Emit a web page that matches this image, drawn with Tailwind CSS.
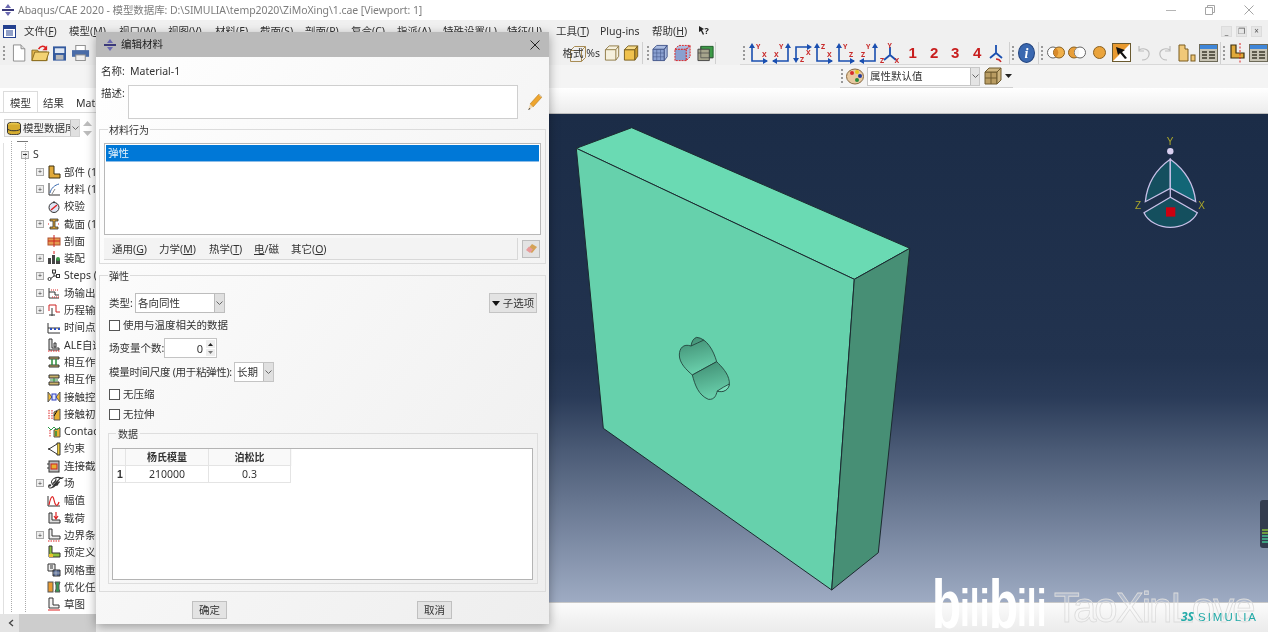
<!DOCTYPE html>
<html lang="zh">
<head>
<meta charset="utf-8">
<title>Abaqus/CAE 2020</title>
<script src="https://cdn.jsdelivr.net/npm/@tailwindcss/browser@4"></script>
</head>
<body class="m-0 overflow-hidden bg-white">
<svg width="0" height="0" class="absolute">
  <defs>
    <g id="arr"><path d="M3 5V19H18" fill="none" stroke="#1a4fb0" stroke-width="1.6"/><path d="M3 1l-3 5h6zM19 19l-5-3v6z" fill="#1a4fb0"/></g>
    <g id="arl"><path d="M17 5V19H2" fill="none" stroke="#1a4fb0" stroke-width="1.6"/><path d="M17 1l-3 5h6zM1 19l5-3v6z" fill="#1a4fb0"/></g>
    <g id="tb"><rect x=".5" y=".5" width="18" height="17" fill="#c8c4b4" stroke="#6d6a58"/><rect x="1" y="1" width="17" height="4" fill="#3f86d8"/><path d="M3 7h5v2H3zM10 7h6v2h-6zM3 10h5v2H3zM10 10h6v2h-6zM3 13h5v2H3zM10 13h6v2h-6z" fill="#5e5b4c"/></g>
    <g id="lp"><path d="M2 1h5v8h6v4H2z" fill="#e0a93a" stroke="#3d3010"/></g>
  </defs>
</svg>
<div class="relative w-[1268px] h-[632px] overflow-hidden bg-white blur-[0.4px] text-[#333333] text-[10.5px] leading-none font-['Noto_Sans','Noto_Sans_CJK_SC',sans-serif]">

  <!-- title bar -->
  <div class="h-[20px] flex items-center bg-white">
    <svg width="14" height="14" viewBox="0 0 14 14" class="ml-[1px]"><path d="M7 1l3 4H4zM7 13l3-4H4z" fill="#6a68b0"/><rect x="1" y="6" width="12" height="2" fill="#3b3a7a"/></svg>
    <span class="ml-[3px] text-[10.5px] text-[#7d7d7d] tracking-[-0.07px] whitespace-nowrap">Abaqus/CAE 2020 - 模型数据库: D:\SIMULIA\temp2020\ZiMoXing\1.cae [Viewport: 1]</span>
    <div class="ml-auto flex items-center text-[#9a9a9a]">
      <span class="w-[10px] h-px bg-[#b5b5b5] mr-[29px]"></span>
      <svg width="10" height="10" viewBox="0 0 10 10" class="mr-[29px]"><path d="M.5 2.5h7v7h-7zM2.5 2.5v-2h7v7h-2" fill="none" stroke="#a5a5a5"/></svg>
      <svg width="10" height="10" viewBox="0 0 10 10" class="mr-[14px]"><path d="M.5.5l9 9M9.5.5l-9 9" stroke="#a5a5a5"/></svg>
    </div>
  </div>

  <!-- menu bar -->
  <div class="h-[21px] pt-[1px] flex items-center bg-[#f0f0f0] whitespace-nowrap">
    <svg width="13" height="13" viewBox="0 0 13 13" class="ml-[3px] mr-[8px]"><rect x=".5" y=".5" width="12" height="12" fill="#fff" stroke="#23408f"/><rect x="1" y="1" width="11" height="3" fill="#23408f"/><path d="M3 6h7M3 8h7M3 10h7" stroke="#23408f"/></svg>
    <span class="w-[45px]">文件(<u>F</u>)</span>
    <span class="w-[50px]">模型(<u>M</u>)</span>
    <span class="w-[49px]">视口(<u>W</u>)</span>
    <span class="w-[47px]">视图(<u>V</u>)</span>
    <span class="w-[45px]">材料(<u>E</u>)</span>
    <span class="w-[45px]">截面(<u>S</u>)</span>
    <span class="w-[46px]">剖面(<u>P</u>)</span>
    <span class="w-[46px]">复合(<u>C</u>)</span>
    <span class="w-[46px]">指派(<u>A</u>)</span>
    <span class="w-[64px]">特殊设置(<u>L</u>)</span>
    <span class="w-[49px]">特征(<u>U</u>)</span>
    <span class="w-[44px]">工具(<u>T</u>)</span>
    <span class="w-[52px]">Plug-ins</span>
    <span class="w-[46px]">帮助(<u>H</u>)</span>
    <svg width="13" height="13" viewBox="0 0 13 13"><path d="M1 1l5 3-2 1 2 4-1 1-2-4-2 1z" fill="#222"/><text x="6.500" y="9" font-size="9" font-weight="700" fill="#222">?</text></svg>
    <div class="ml-auto mr-[6px] flex gap-[4px]">
      <span class="w-[11px] h-[11px] bg-[#e6e6e6] border border-[#dcdcdc] text-[8px] text-center text-[#555]">_</span>
      <span class="w-[11px] h-[11px] bg-[#e6e6e6] border border-[#dcdcdc] text-[8px] text-center text-[#555]">❐</span>
      <span class="w-[11px] h-[11px] bg-[#e6e6e6] border border-[#dcdcdc] text-[8px] text-center text-[#555]">×</span>
    </div>
  </div>

  <!-- toolbar row 1 -->
  <div class="h-[24px] flex items-center bg-[#f0f0f0]">
    <span class="ml-[3px] mr-[7px] h-[14px] border-l-2 border-dotted border-[#999]"></span>
    <svg width="15" height="18" viewBox="0 0 15 18"><path d="M1.5.5h8l4 4v13h-12z" fill="#fff" stroke="#8b8b8b"/><path d="M9.5.5v4h4" fill="#ddd" stroke="#8b8b8b"/></svg>
    <svg width="20" height="18" viewBox="0 0 20 18" class="ml-[5px]"><path d="M1 6h6l1 2h9v9H1z" fill="#e6b94f" stroke="#8a6b1e"/><path d="M4 8h15l-3 9H1z" fill="#f3d273" stroke="#8a6b1e"/><path d="M8 5c2-4 6-4 8-1" fill="none" stroke="#d22" stroke-width="1.6"/><path d="M17 1v5h-5z" fill="#d22"/></svg>
    <svg width="14" height="15" viewBox="0 0 14 15" class="ml-[3px]"><rect width="14" height="15" fill="#345a9e"/><rect x="2" y="2" width="10" height="5" fill="#dfe7f3"/><rect x="3" y="9" width="8" height="5" fill="#b8b8b8"/></svg>
    <svg width="18" height="16" viewBox="0 0 18 16" class="ml-[6px]"><rect x="4" width="10" height="6" fill="#fff" stroke="#888"/><rect y="5" width="18" height="7" fill="#4a6ca8"/><rect x="4" y="10" width="10" height="6" fill="#eee" stroke="#888"/></svg>

    <span class="ml-[473px] whitespace-nowrap relative">
      <svg width="18" height="18" viewBox="0 0 18 18" class="absolute left-[6px] -top-[3px]"><path d="M1.5 5.5h11v11h-11zM1.5 5.5l4-4h11v11l-4 4M12.5 5.5l4-4" fill="none" stroke="#a88c55"/></svg>
      <span class="relative">格式 %s</span>
    </span>
    <svg width="17" height="18" viewBox="0 0 17 18" class="ml-[4px]"><path d="M1.5 5.5h11v11h-11zM1.5 5.5l4-4h10v11l-3 4M12.5 5.5l3-4" fill="#f5f0dd" stroke="#8f7a45"/></svg>
    <svg width="17" height="18" viewBox="0 0 17 18" class="ml-[3px]"><path d="M1.5 5.5h11v11h-11z" fill="#f0c24e" stroke="#7a5f1e"/><path d="M1.5 5.5l4-4h10l-3 4z" fill="#f8dc8a" stroke="#7a5f1e"/><path d="M12.5 5.5l3-4v11l-3 4z" fill="#c99a2b" stroke="#7a5f1e"/></svg>
    <span class="ml-[3px] h-[22px] border-l border-[#d0d0d0]"></span>
    <span class="ml-[4px] mr-[3px] h-[14px] border-l-2 border-dotted border-[#999]"></span>
    <svg width="17" height="18" viewBox="0 0 17 18"><path d="M1 5h12v12H1z" fill="#8aa0d0" stroke="#45588c"/><path d="M1 5l4-4h11l-3 4zM13 5l3-4v12l-3 4z" fill="#a9bbe0" stroke="#45588c"/><path d="M5 5v12M9 5v12M1 9h12M1 13h12" stroke="#45588c" stroke-width=".6"/></svg>
    <svg width="18" height="18" viewBox="0 0 18 18" class="ml-[6px]"><path d="M1 5h12v12H1z" fill="#8aa0d0" stroke="#d22" stroke-dasharray="2 1"/><path d="M1 5l4-4h12l-4 4zM13 5l4-4v12l-4 4z" fill="#a9bbe0" stroke="#d22" stroke-dasharray="2 1"/></svg>
    <svg width="18" height="18" viewBox="0 0 18 18" class="ml-[6px]"><path d="M4 2h13v12H4z" fill="#3c9a46" stroke="#1f5c2a"/><path d="M1 5h12v12H1z" fill="#a7a58c" stroke="#444"/><path d="M4 2v12h13M1 9h12" fill="none" stroke="#444" stroke-width=".7"/></svg>
    <span class="ml-[1px] h-[22px] border-l border-[#d0d0d0]"></span>

    <div class="ml-[24px] flex-1 h-[24px] border-b border-[#d8d8d8] flex items-center">
      <span class="ml-[3px] mr-[4px] h-[14px] border-l-2 border-dotted border-[#999]"></span>
      <svg width="20" height="22" viewBox="0 0 20 22" font-size="7" font-weight="700" fill="#c82a2a"><use href="#arr"/><text x="7" y="7">Y</text><text x="13" y="15">X</text></svg>
      <svg width="20" height="22" viewBox="0 0 20 22" font-size="7" font-weight="700" fill="#c82a2a" class="ml-[2px]"><use href="#arl"/><text x="3" y="15">X</text><text x="8" y="7">Y</text></svg>
      <svg width="20" height="22" viewBox="0 0 20 22" font-size="7" font-weight="700" fill="#c82a2a" class="ml-[2px]"><path d="M3 19V5H17" fill="none" stroke="#1a4fb0" stroke-width="1.6"/><path d="M3 21l-3-5h6zM19 5l-5-3v6z" fill="#1a4fb0"/><text x="7" y="20">Z</text><text x="13" y="13">X</text></svg>
      <svg width="20" height="22" viewBox="0 0 20 22" font-size="7" font-weight="700" fill="#c82a2a" class="ml-[1px]"><use href="#arr"/><text x="7" y="7">Z</text><text x="13" y="15">X</text></svg>
      <svg width="20" height="22" viewBox="0 0 20 22" font-size="7" font-weight="700" fill="#c82a2a" class="ml-[2px]"><use href="#arr"/><text x="7" y="7">Y</text><text x="13" y="15">Z</text></svg>
      <svg width="20" height="22" viewBox="0 0 20 22" font-size="7" font-weight="700" fill="#c82a2a" class="ml-[2px]"><use href="#arl"/><text x="3" y="15">Z</text><text x="8" y="7">Y</text></svg>
      <svg width="20" height="22" viewBox="0 0 20 22" font-size="7" font-weight="700" fill="#c82a2a" class="ml-[2px]"><path d="M10 5v8L4 18M10 13l6 5" fill="none" stroke="#1a4fb0" stroke-width="1.8"/><text x="7.500" y="6">Y</text><text x="0" y="21">Z</text><text x="14.500" y="21">X</text></svg>
      <span class="ml-[8px] w-[21.5px] text-[#c81e1e] text-[15px] font-bold font-['Liberation_Sans',sans-serif]">1</span>
      <span class="w-[21px] text-[#c81e1e] text-[15px] font-bold font-['Liberation_Sans',sans-serif]">2</span>
      <span class="w-[22px] text-[#c81e1e] text-[15px] font-bold font-['Liberation_Sans',sans-serif]">3</span>
      <span class="w-[13px] text-[#c81e1e] text-[15px] font-bold font-['Liberation_Sans',sans-serif]">4</span>
      <svg width="16" height="20" viewBox="0 0 16 20" class="ml-[2px]"><path d="M8 2v8L2 15M8 10l6 5" fill="none" stroke="#1a4fb0" stroke-width="1.8"/><path d="M8 16c2 0 4 1 5 3" fill="none" stroke="#c82a2a" stroke-width="1.4"/></svg>
      <span class="ml-[5px] h-[22px] border-l border-[#d0d0d0]"></span>
      <span class="ml-[2px] h-[14px] border-l-2 border-dotted border-[#999]"></span>
      <span class="ml-[4px] w-[17px] h-[20px] rounded-[50%] bg-[#3a68b0] border border-[#24457f] text-white text-[14px] font-bold italic text-center leading-[19px] font-['Liberation_Serif',serif]">i</span>
      <span class="ml-[3px] h-[22px] border-l border-[#d0d0d0]"></span>
      <span class="ml-[2px] h-[14px] border-l-2 border-dotted border-[#999]"></span>
      <svg width="20" height="13" viewBox="0 0 20 13" class="ml-[3px]"><circle cx="7" cy="6.5" r="5.5" fill="#fff" stroke="#666"/><circle cx="13" cy="6.5" r="5.5" fill="#f0b04a" stroke="#8a6020"/><path d="M10 2a5.5 5.5 0 0 1 0 9a5.5 5.5 0 0 1 0-9z" fill="#d98a2a"/></svg>
      <svg width="20" height="13" viewBox="0 0 20 13" class="ml-[1px]"><circle cx="7" cy="6.5" r="5.5" fill="#e89f3a" stroke="#8a6020"/><circle cx="13" cy="6.5" r="5.5" fill="#fff" stroke="#666"/><path d="M10 2a5.5 5.5 0 0 0 0 9a5.5 5.5 0 0 0 0-9z" fill="#f4f4f4"/></svg>
      <svg width="13" height="13" viewBox="0 0 13 13" class="ml-[6px]"><circle cx="6.5" cy="6.5" r="6" fill="#eaa43c" stroke="#8a6020"/></svg>
      <svg width="19" height="19" viewBox="0 0 19 19" class="ml-[6px]"><rect x=".5" y=".5" width="18" height="18" fill="#fff" stroke="#6a5a30"/><path d="M1 1h17L1 18z" fill="#e99a30"/><path d="M4 4l9 3-3 2 5 6-2 1-5-6-2 2z" fill="#111"/></svg>
      <svg width="15" height="16" viewBox="0 0 15 16" class="ml-[5px]"><path d="M3 5c5-3 11 0 10 5s-5 5-7 5M3 1v5h5" fill="none" stroke="#bdbdbd" stroke-width="1.2"/></svg>
      <svg width="15" height="16" viewBox="0 0 15 16" class="ml-[7px]"><path d="M12 5C7 2 1 5 2 10s5 5 7 5M12 1v5H7" fill="none" stroke="#bdbdbd" stroke-width="1.2"/></svg>
      <svg width="18" height="18" viewBox="0 0 18 18" class="ml-[5px]"><path d="M1 1h6v4h3v12H1z" fill="#f0c878" stroke="#7b5c20"/><rect x="13" y="11" width="4" height="6" fill="#f0c878" stroke="#7b5c20"/></svg>
      <svg width="19" height="18" viewBox="0 0 19 18" class="ml-[3px]"><use href="#tb"/></svg>
      <span class="ml-[2px] h-[22px] border-l border-[#d0d0d0]"></span>
      <span class="ml-[2px] h-[14px] border-l-2 border-dotted border-[#999]"></span>
      <svg width="16" height="20" viewBox="0 0 16 20" class="ml-[4px]"><path d="M2 2h5v8h8v5H2z" fill="#e0a93a" stroke="#3d3010" stroke-width="1.2"/><path d="M11 0v20" stroke="#d22" stroke-dasharray="2 1.5"/></svg>
      <svg width="19" height="18" viewBox="0 0 19 18" class="ml-[4px]"><use href="#tb"/></svg>
    </div>
  </div>

  <!-- toolbar row 2 -->
  <div class="h-[23px] flex items-center bg-[#f4f4f4]">
    <div class="ml-[840px] w-[173px] h-[23px] border-b border-[#d0d0d0] flex items-center">
      <span class="ml-[1px] h-[14px] border-l-2 border-dotted border-[#999]"></span>
      <svg width="18" height="17" viewBox="0 0 18 17" class="ml-[3px]"><ellipse cx="9" cy="8.5" rx="8.5" ry="7.5" fill="#e7c9a0" stroke="#8a6a40"/><circle cx="6" cy="5" r="2" fill="#d62c2c"/><circle cx="11" cy="4" r="2" fill="#e6c81e"/><circle cx="14" cy="8" r="2" fill="#223a9c"/><circle cx="11" cy="12" r="2" fill="#2a8c3a"/></svg>
      <div class="ml-[3px] w-[113px] h-[19px] bg-white border border-[#c8c8c8] flex items-center">
        <span class="ml-[2px] text-[10.5px]">属性默认值</span>
        <span class="ml-auto w-[9px] h-[17px] bg-[#e4e4e4] border-l border-[#bdbdbd] flex items-center justify-center"><svg width="7" height="4" viewBox="0 0 7 4"><path d="M.5.5l3 3 3-3" fill="none" stroke="#666"/></svg></span>
      </div>
      <svg width="18" height="18" viewBox="0 0 18 18" class="ml-[4px]"><path d="M1 5h12v12H1z" fill="#b99c62" stroke="#6e5a2e"/><path d="M1 5l4-4h12l-4 4zM13 5l4-4v12l-4 4z" fill="#cdb47e" stroke="#6e5a2e"/><path d="M1 11h12M7 5v12" stroke="#6e5a2e"/></svg>
      <svg width="7" height="4" viewBox="0 0 7 4" class="ml-[3px]"><path d="M0 0h7L3.500 4z" fill="#222"/></svg>
    </div>
  </div>

  <!-- main area -->
  <div class="flex h-[544px]">
    <!-- left panel -->
    <div class="relative w-[96px] shrink-0 bg-white whitespace-nowrap overflow-hidden">
      <div class="h-[25px] pt-[4px] flex items-end bg-white border-b border-[#dcdcdc]">
        <span class="ml-[3px] shrink-0 w-[35px] h-[21px] pt-[2px] bg-white border border-b-0 border-[#dcdcdc] flex items-center justify-center">模型</span>
        <span class="ml-[5px] shrink-0 w-[33px] h-[19px] pt-[1px] flex items-center">结果</span>
        <span class="shrink-0 w-[30px] h-[19px] pt-[1px] flex items-center">Material</span>
      </div>
      <div class="h-[30px] flex items-center">
        <div class="ml-[4px] w-[76px] h-[18px] flex items-center bg-[#f4f4f4] border border-[#d4d4d4]">
          <svg width="14" height="13" viewBox="0 0 14 13" class="ml-[2px] shrink-0"><ellipse cx="7" cy="2.500" rx="6.500" ry="2.500" fill="#e6c64c" stroke="#333"/><path d="M.5 2.500v8c0 3 13 3 13 0v-8" fill="#d6ad30" stroke="#333"/><path d="M.5 6.500c0 3 13 3 13 0" fill="none" stroke="#333"/></svg>
          <span class="ml-[2px] w-[47px] overflow-hidden">模型数据库</span>
          <span class="ml-auto w-[9px] h-[16px] bg-[#e0e0e0] border-l border-[#bbb] flex items-center justify-center"><svg width="7" height="4" viewBox="0 0 7 4"><path d="M.5.5l3 3 3-3" fill="none" stroke="#666"/></svg></span>
        </div>
        <div class="ml-[3px] flex flex-col gap-[5px]">
          <svg width="9" height="5" viewBox="0 0 9 5"><path d="M0 5L4.500 0 9 5z" fill="#bdbdbd"/></svg>
          <svg width="9" height="5" viewBox="0 0 9 5"><path d="M0 0l4.500 5L9 0z" fill="#bdbdbd"/></svg>
        </div>
      </div>

      <!-- tree guide lines -->
      <span class="absolute left-[11px] top-[53px] h-[471px] border-l border-dotted border-[#aaa]"></span>
      <span class="absolute left-[25px] top-[53px] h-[471px] border-l border-dotted border-[#aaa]"></span>
      <span class="absolute left-[17px] top-[53px] w-[11px] h-px bg-[#777]"></span>

      <div class="w-[300px] h-[471px] ml-[3px] border-l border-[#e0e0e0] pt-[3px] overflow-hidden">
        <div class="h-[17.300px] flex items-center"><span class="ml-[17px] w-[8px] h-[8px] bg-[#eee] border border-[#aaa] flex items-center justify-center"><i class="w-[4px] h-px bg-[#333]"></i></span><span class="ml-[4px]">S</span></div>

        <div class="h-[17.300px] flex items-center"><span class="ml-[32px] w-[8px] h-[8px] bg-[#eee] border border-[#aaa] flex items-center justify-center text-[7px] text-[#333]">+</span><svg width="14" height="14" viewBox="0 0 14 14" class="ml-[3px] mr-[3px]"><use href="#lp"/></svg>部件 (1)</div>
        <div class="h-[17.300px] flex items-center"><span class="ml-[32px] w-[8px] h-[8px] bg-[#eee] border border-[#aaa] flex items-center justify-center text-[7px] text-[#333]">+</span><svg width="14" height="14" viewBox="0 0 14 14" class="ml-[3px] mr-[3px]"><path d="M2 1v12h11" fill="none" stroke="#333"/><path d="M3 11C4 6 8 3 12 2" fill="none" stroke="#3a6ab0"/><path d="M5 12l3-5" stroke="#888"/></svg>材料 (1)</div>
        <div class="h-[17.300px] flex items-center"><span class="ml-[43px]"></span><svg width="14" height="14" viewBox="0 0 14 14" class="mr-[3px]"><circle cx="7" cy="7.500" r="5" fill="#dfe6f5" stroke="#333"/><path d="M4 10l6-5" stroke="#d22" stroke-width="1.500"/><path d="M7 1v2" stroke="#333"/></svg>校验</div>
        <div class="h-[17.300px] flex items-center"><span class="ml-[32px] w-[8px] h-[8px] bg-[#eee] border border-[#aaa] flex items-center justify-center text-[7px] text-[#333]">+</span><svg width="14" height="14" viewBox="0 0 14 14" class="ml-[3px] mr-[3px]"><path d="M3 2h8v2H8v6h3v2H3v-2h3V4H3z" fill="#d8a034" stroke="#333" stroke-width=".8"/><path d="M1 7h2M11 7h2" stroke="#d22" stroke-dasharray="1 1"/></svg>截面 (1)</div>
        <div class="h-[17.300px] flex items-center"><span class="ml-[43px]"></span><svg width="14" height="14" viewBox="0 0 14 14" class="mr-[3px]"><rect x="1" y="4" width="12" height="7" fill="#e49a50" stroke="#b05030"/><path d="M7 1v12M1 7h12" stroke="#c22"/></svg>剖面</div>
        <div class="h-[17.300px] flex items-center"><span class="ml-[32px] w-[8px] h-[8px] bg-[#eee] border border-[#aaa] flex items-center justify-center text-[7px] text-[#333]">+</span><svg width="14" height="14" viewBox="0 0 14 14" class="ml-[3px] mr-[3px]"><path d="M1 7h3v6H1zM5 4h3v9H5zM9 8h4v5H9z" fill="#444"/><circle cx="11" cy="8" r="2" fill="#3a9a46"/><path d="M7 0v3" stroke="#d22"/></svg>装配</div>
        <div class="h-[17.300px] flex items-center"><span class="ml-[32px] w-[8px] h-[8px] bg-[#eee] border border-[#aaa] flex items-center justify-center text-[7px] text-[#333]">+</span><svg width="14" height="14" viewBox="0 0 14 14" class="ml-[3px] mr-[3px]"><path d="M3 10l4-3 4 0M7 7V3" stroke="#333" fill="none"/><circle cx="2.500" cy="10" r="1.500" fill="#fff" stroke="#333"/><rect x="5.500" y="1" width="3" height="3" fill="#fff" stroke="#333"/><rect x="9.500" y="5.500" width="3" height="3" fill="#fff" stroke="#333"/></svg>Steps (2)</div>
        <div class="h-[17.300px] flex items-center"><span class="ml-[32px] w-[8px] h-[8px] bg-[#eee] border border-[#aaa] flex items-center justify-center text-[7px] text-[#333]">+</span><svg width="14" height="14" viewBox="0 0 14 14" class="ml-[3px] mr-[3px]"><path d="M2 2v10h10M2 6h6v3h4" fill="none" stroke="#333"/><path d="M4 4h8M5 11h8" stroke="#d22" stroke-dasharray="1 1"/></svg>场输出请求</div>
        <div class="h-[17.300px] flex items-center"><span class="ml-[32px] w-[8px] h-[8px] bg-[#eee] border border-[#aaa] flex items-center justify-center text-[7px] text-[#333]">+</span><svg width="14" height="14" viewBox="0 0 14 14" class="ml-[3px] mr-[3px]"><path d="M2 2h7v7M2 2v6M9 9h4" fill="none" stroke="#c22"/><path d="M5 5v8M2 12h6" stroke="#333"/></svg>历程输出请求</div>
        <div class="h-[17.300px] flex items-center"><span class="ml-[43px]"></span><svg width="14" height="14" viewBox="0 0 14 14" class="mr-[3px]"><path d="M1 2v10h12M1 7h12" fill="none" stroke="#333"/><path d="M3 8h2M7 8h2M11 8h2" stroke="#2a4cc0" stroke-width="2"/></svg>时间点</div>
        <div class="h-[17.300px] flex items-center"><span class="ml-[43px]"></span><svg width="14" height="14" viewBox="0 0 14 14" class="mr-[3px]"><path d="M2 1h3v9h7v2H2zM7 5h2v4H7z" fill="#ddd" stroke="#333"/><path d="M1 13h12" stroke="#d22" stroke-dasharray="1.500 1"/></svg>ALE自适应</div>
        <div class="h-[17.300px] flex items-center"><span class="ml-[43px]"></span><svg width="14" height="14" viewBox="0 0 14 14" class="mr-[3px]"><path d="M2 2h10v2H2zM2 10h10v2H2z" fill="#cbb26a" stroke="#333"/><path d="M5 4v6M9 4v6" stroke="#2a8c3a" stroke-width="1.500"/></svg>相互作用</div>
        <div class="h-[17.300px] flex items-center"><span class="ml-[43px]"></span><svg width="14" height="14" viewBox="0 0 14 14" class="mr-[3px]"><path d="M2 2h10v3H2zM2 9h10v3H2z" fill="#cbb26a" stroke="#333"/><path d="M7 5v4M3 7h8" stroke="#2a8c3a"/></svg>相互作用属性</div>
        <div class="h-[17.300px] flex items-center"><span class="ml-[43px]"></span><svg width="14" height="14" viewBox="0 0 14 14" class="mr-[3px]"><path d="M1 2l4 5-4 5zM13 2l-4 5 4 5z" fill="#eebb3a" stroke="#555"/><rect x="5" y="4" width="4" height="6" fill="#dfe6ff" stroke="#2a3cc0"/></svg>接触控制</div>
        <div class="h-[17.300px] flex items-center"><span class="ml-[43px]"></span><svg width="14" height="14" viewBox="0 0 14 14" class="mr-[3px]"><path d="M7 13V5l6-3v11z" fill="#e8b030" stroke="#555"/><path d="M2 3v10M5 3v10" stroke="#d22" stroke-dasharray="1.500 1"/><path d="M7 9l3-5" stroke="#111"/></svg>接触初始化</div>
        <div class="h-[17.300px] flex items-center"><span class="ml-[43px]"></span><svg width="14" height="14" viewBox="0 0 14 14" class="mr-[3px]"><path d="M7 13V6l6-2v9z" fill="#e8b030" stroke="#555"/><path d="M1 3l3 3 3-3 3 3 3-3" fill="none" stroke="#2a9a46"/><path d="M3 6v7" stroke="#d22" stroke-dasharray="1.500 1"/><path d="M9 12V7" stroke="#2a8c3a" stroke-width="1.500"/></svg>Contact</div>
        <div class="h-[17.300px] flex items-center"><span class="ml-[43px]"></span><svg width="14" height="14" viewBox="0 0 14 14" class="mr-[3px]"><path d="M10 1h3v12h-3z" fill="#e8c840" stroke="#333"/><path d="M10 2L2 7l8 5" fill="#fff" stroke="#333"/><circle cx="2" cy="7" r="1" fill="#333"/></svg>约束</div>
        <div class="h-[17.300px] flex items-center"><span class="ml-[43px]"></span><svg width="14" height="14" viewBox="0 0 14 14" class="mr-[3px]"><rect x="2" y="2" width="10" height="11" fill="#bbb" stroke="#333"/><rect x="4" y="5" width="6" height="5" fill="#e8b030" stroke="#c22"/><path d="M0 5h2M0 9h2" stroke="#333"/></svg>连接截面</div>
        <div class="h-[17.300px] flex items-center"><span class="ml-[32px] w-[8px] h-[8px] bg-[#eee] border border-[#aaa] flex items-center justify-center text-[7px] text-[#333]">+</span><span class="ml-[3px] mr-[3px] w-[14px] text-center text-[15px] italic font-bold font-['Liberation_Serif',serif]">ℱ</span>场</div>
        <div class="h-[17.300px] flex items-center"><span class="ml-[43px]"></span><svg width="14" height="14" viewBox="0 0 14 14" class="mr-[3px]"><path d="M1 2v10h12" fill="none" stroke="#333"/><path d="M2 11C4 1 6 1 7 6s3 8 5 2" fill="none" stroke="#d22" stroke-width="1.200"/></svg>幅值</div>
        <div class="h-[17.300px] flex items-center"><span class="ml-[43px]"></span><svg width="14" height="14" viewBox="0 0 14 14" class="mr-[3px]"><path d="M2 2h3v7h8v3H2z" fill="#ddd" stroke="#333"/><path d="M9 1v6M7 5l2 3 2-3" fill="none" stroke="#d22" stroke-width="1.200"/></svg>载荷</div>
        <div class="h-[17.300px] flex items-center"><span class="ml-[32px] w-[8px] h-[8px] bg-[#eee] border border-[#aaa] flex items-center justify-center text-[7px] text-[#333]">+</span><svg width="14" height="14" viewBox="0 0 14 14" class="ml-[3px] mr-[3px]"><path d="M2 1h3v7h8v3H2z" fill="#eee" stroke="#333"/><path d="M1 13h12" stroke="#d22" stroke-dasharray="1.500 1"/></svg>边界条件</div>
        <div class="h-[17.300px] flex items-center"><span class="ml-[43px]"></span><svg width="14" height="14" viewBox="0 0 14 14" class="mr-[3px]"><path d="M2 1h3v7h8v4H2z" fill="#8fc23a" stroke="#333"/><path d="M2 9h4v3H2z" fill="#e8c030"/></svg>预定义场</div>
        <div class="h-[17.300px] flex items-center"><span class="ml-[43px]"></span><svg width="14" height="14" viewBox="0 0 14 14" class="mr-[3px]"><path d="M1 1h7v7H1z" fill="#eee" stroke="#333"/><path d="M3 3h3M3 5h3" stroke="#333"/><path d="M6 7h7v6H6z" fill="#5a6e98" stroke="#333"/><path d="M9 7v6M6 10h7" stroke="#ddd" stroke-width=".5"/></svg>网格重划分</div>
        <div class="h-[17.300px] flex items-center"><span class="ml-[43px]"></span><svg width="14" height="14" viewBox="0 0 14 14" class="mr-[3px]"><rect x="1" y="2" width="5" height="10" fill="#e89a30" stroke="#555"/><path d="M8 2h5l-1 3v4l1 3H8l1-3V5z" fill="#3a9a56" stroke="#555"/></svg>优化任务</div>
        <div class="h-[17.300px] flex items-center"><span class="ml-[43px]"></span><svg width="14" height="14" viewBox="0 0 14 14" class="mr-[3px]"><path d="M2 1h4v7h6v3H2z" fill="#f4f4f4" stroke="#333"/><path d="M1 13h12" stroke="#d22"/></svg>草图</div>
      </div>

      <div class="absolute left-0 bottom-0 w-full h-[18px] bg-[#e4e4e4] flex items-center">
        <svg width="6" height="8" viewBox="0 0 6 8" class="ml-[8px]"><path d="M5 1L1.500 4 5 7" fill="none" stroke="#444" stroke-width="1.300"/></svg>
        <span class="ml-[5px] flex-1 h-[18px] bg-[#cdcdcd]"></span>
      </div>
    </div>

    <!-- viewport column -->
    <div class="flex-1 flex flex-col">
      <div class="h-[26px] shrink-0 bg-linear-to-b from-white to-[#ececec] border-b border-[#bdbdbd]"></div>
      <div class="relative h-[488px] shrink-0 bg-[linear-gradient(to_bottom,#1b2c47_0%,#22334f_50%,#2a3b58_58%,#4b5b76_69%,#66758f_79%,#9eabc3_100%)]">
        <svg width="1172" height="488" viewBox="96 114 1172 488" class="absolute left-0 top-0">
          <defs>
            <linearGradient id="hu" x1="0" y1="0" x2=".25" y2="1"><stop offset="0" stop-color="#3e8a70"/><stop offset="1" stop-color="#6ad0ac"/></linearGradient>
            <linearGradient id="hl" x1="0" y1="0" x2=".25" y2="1"><stop offset="0" stop-color="#3e8a70"/><stop offset="1" stop-color="#69cfab"/></linearGradient>
          </defs>
          <g stroke="#1c2a30" stroke-width="1" stroke-linejoin="round">
            <path d="M576.300 148.300L631.700 127.700L909.800 248.300L854.300 279.300Z" fill="#6adab3"/>
            <path d="M576.300 148.300L854.300 279.300L831.700 590L603.300 428.300Z" fill="#66d1ac"/>
            <path d="M854.300 279.300L909.800 248.300L878.300 552.700L831.700 590Z" fill="#478f75"/>
          </g>
          <g transform="translate(640 320) scale(.3333)" stroke="#22403a" stroke-width="2.600">
            <path d="M153 78C130 70 118 85 118 105C118 130 140 150 157 165L230 125C220 90 200 55 170 52C160 55 155 65 153 78Z" fill="url(#hu)"/>
            <path d="M157 165C165 195 175 225 205 238C225 240 228 225 232 213C250 220 270 205 268 185C265 160 245 140 230 125Z" fill="url(#hl)"/>
            <path d="M153 78C165 72 180 66 192 60" fill="none"/>
            <path d="M232 213C245 205 255 198 268 192C268 208 250 220 232 213Z" fill="#7adfbc"/>
          </g>
          <g>
            <circle cx="1170.300" cy="151.300" r="3.200" fill="#d8cff0"/>
            <path d="M1170.300 159.300C1155 170 1147 185 1145.300 201.700L1170.300 188.300Z" fill="#154f5f" stroke="#c8c0e8" stroke-width="1.300"/>
            <path d="M1170.300 159.300C1185 170 1194 185 1195.700 201.700L1170.300 188.300Z" fill="#126676" stroke="#c8c0e8" stroke-width="1.300"/>
            <path d="M1170.300 197.300L1144 212.700C1148 222 1160 227.300 1170.300 227.300C1181 227.300 1193 222 1197.300 212.700Z" fill="#144f5e" stroke="#c8c0e8" stroke-width="1.300"/>
            <path d="M1170.300 188.300V197.300" stroke="#c8c0e8" stroke-width="1.300"/>
            <rect x="1166" y="207.300" width="9.300" height="9.300" fill="#cc0010"/>
          </g>
          <g fill="#aaa62a" font-size="10" text-anchor="middle" font-family="Liberation Sans">
            <text x="1170" y="145">Y</text><text x="1138" y="209">Z</text><text x="1201.700" y="209">X</text>
          </g>
        </svg>
        <div class="absolute right-0 top-[386px] w-[8px] h-[48px] rounded-l-[3px] bg-[#333c4e] flex flex-col justify-end gap-px pb-[5px] pl-[2px]">
          <i class="h-[2px] bg-[#6f9d3e]"></i><i class="h-[2px] bg-[#6f9d3e]"></i><i class="h-[2px] bg-[#3ea080]"></i><i class="h-[2px] bg-[#3ea080]"></i><i class="h-[2px] bg-[#3ea080]"></i>
        </div>
      </div>
      <div class="flex-1 bg-linear-to-b from-[#fbfbfb] to-[#ebebeb] border-t border-[#c8c8c8]"></div>
    </div>
  </div>

  <!-- watermark -->
  <div class="absolute left-[932px] top-[570px] flex text-white font-bold font-['Liberation_Sans',sans-serif] h-[62px] overflow-hidden">
    <span class="w-[28px] text-[68px] leading-[68px] scale-x-[0.7] origin-left">b</span>
    <span class="w-[29px] mt-[8px] text-[52px] leading-[60px] scale-x-[0.68] origin-left">ili</span>
    <span class="w-[28px] text-[68px] leading-[68px] scale-x-[0.7] origin-left">b</span>
    <span class="w-[29px] mt-[8px] text-[52px] leading-[60px] scale-x-[0.68] origin-left">ili</span>
  </div>
  <div class="absolute left-[1054px] top-[583px] text-white/20 text-[42px] leading-[50px] tracking-[-2px] [-webkit-text-stroke:0.8px_#dcdcdc] font-['Liberation_Sans',sans-serif]">TaoXinLove</div>
  <div class="absolute left-[1181px] top-[611px] flex items-end text-[#22aaa8]">
    <span class="text-[12px] font-bold italic leading-[12px]">3S</span>
    <span class="ml-[4px] text-[11.5px] tracking-[2px] leading-[12px] font-['Liberation_Sans',sans-serif]">SIMULIA</span>
  </div>

  <!-- dialog window -->
  <div class="absolute left-[96px] top-[32px] w-[453px] h-[592px] flex flex-col bg-linear-to-br from-white to-[#eeeeee] shadow-[0_3px_10px_rgba(0,0,0,0.35)]">
    <div class="h-[25px] shrink-0 bg-[#bababa] flex items-center">
      <svg width="14" height="14" viewBox="0 0 14 14" class="ml-[7px]"><path d="M7 1l3 4H4zM7 13l3-4H4z" fill="#6a68b0"/><rect x="1" y="6" width="12" height="2" fill="#3b3a7a"/></svg>
      <span class="ml-[4px] text-[10.5px] text-[#1e1e1e]">编辑材料</span>
      <svg width="10" height="10" viewBox="0 0 10 10" class="ml-auto mr-[9px]"><path d="M.5.5l9 9M9.5.5l-9 9" stroke="#222"/></svg>
    </div>

    <div class="flex-1 pl-[3px] whitespace-nowrap">
      <div class="mt-[7px] h-[14px] flex items-center"><span class="ml-[2px] w-[29px]">名称:</span><span>Material-1</span></div>
      <div class="mt-[7px] h-[34px] flex items-start">
        <span class="ml-[2px] mt-[3px] w-[27px]">描述:</span>
        <div class="w-[390px] h-[34px] bg-white border border-[#cfcfcf]"></div>
        <svg width="17" height="18" viewBox="0 0 17 18" class="ml-[8px] mt-[8px]"><path d="M4 11L13 1l3 3-9 10z" fill="#eea52e" stroke="#b57a1c" stroke-width=".6"/><path d="M4 11l3 3-5 3z" fill="#f2d9b0"/><path d="M2 17l1.500-2 1 1z" fill="#333"/><path d="M12.500 1.500l3 3 .5-1-2.500-2.500z" fill="#d8cfc0"/></svg>
      </div>

      <!-- material behaviour group -->
      <div class="relative mt-[10px] w-[447px] h-[135px] border border-[#dcdcdc] pl-[4px] pt-[13px]">
        <span class="absolute left-[8px] -top-[5px] px-[1px] bg-[#fbfbfb] text-[10px] leading-[11px]">材料行为</span>
        <div class="w-[437px] h-[92px] bg-white border border-[#b8b8b8] p-px">
          <div class="h-[17px] pt-[1px] bg-[#0078d7] border-b border-[#8dbde8] text-white/90 pl-[2px] flex items-center">弹性</div>
        </div>
        <div class="mt-[3px] flex items-start">
          <div class="w-[414px] h-[22px] pt-[2px] bg-[#f3f3f3] border-r border-b border-[#d8d8d8] flex items-center">
            <span class="ml-[8px] w-[47px]">通用(<u>G</u>)</span>
            <span class="w-[50px]">力学(<u>M</u>)</span>
            <span class="w-[45px]">热学(<u>T</u>)</span>
            <span class="w-[37px]"><u>电</u>/磁</span>
            <span>其它(<u>O</u>)</span>
          </div>
          <button class="ml-[4px] mt-[2px] w-[18px] h-[18px] bg-[#e3e3e3] border border-[#bdbdbd] flex items-center justify-center"><svg width="13" height="12" viewBox="0 0 13 12"><path d="M7 1l5 3-5 6-5-3z" fill="#d4a256"/><path d="M1 7l3-3.500 4 3L5 10z" fill="#e89a9a"/></svg></button>
        </div>
      </div>

      <!-- elasticity group -->
      <div class="relative mt-[11px] w-[447px] h-[317px] border border-[#dcdcdc] pl-[9px] pr-[8px] pt-[17px]">
        <span class="absolute left-[8px] -top-[5px] px-[1px] bg-[#f8f8f8] text-[10px] leading-[11px]">弹性</span>
        <div class="h-[20px] flex items-center justify-between">
          <div class="flex items-center">
            <span class="w-[26px]">类型:</span>
            <div class="w-[90px] h-[20px] bg-white border border-[#bdbdbd] flex items-center">
              <span class="ml-[2px]">各向同性</span>
              <span class="ml-auto w-[10px] h-[18px] bg-[#e0e0e0] border-l border-[#bbb] flex items-center justify-center"><svg width="7" height="4" viewBox="0 0 7 4"><path d="M.5.5l3 3 3-3" fill="none" stroke="#666"/></svg></span>
            </div>
          </div>
          <button class="w-[48px] h-[20px] bg-[#e3e3e3] border border-[#c4c4c4] flex items-center justify-center"><svg width="8" height="5" viewBox="0 0 8 5" class="mr-[3px]"><path d="M0 0h8L4 5z" fill="#111"/></svg>子选项</button>
        </div>
        <label class="mt-[7px] h-[11px] flex items-center"><span class="w-[11px] h-[11px] bg-white border border-[#555]"></span><span class="ml-[3px]">使用与温度相关的数据</span></label>
        <div class="mt-[7px] h-[20px] flex items-center">
          <span class="w-[55px]">场变量个数:</span>
          <div class="w-[53px] h-[20px] bg-white border border-[#c4c4c4] flex items-center">
            <span class="flex-1 text-right pr-[3px] text-[11px]">0</span>
            <span class="mr-[1px] w-[9px] h-[16px] flex flex-col gap-px">
              <i class="h-[8px] bg-[#eeeeee] flex items-center justify-center"><svg width="5" height="3" viewBox="0 0 5 3"><path d="M0 3L2.500 0 5 3z" fill="#222"/></svg></i>
              <i class="h-[7px] bg-[#eeeeee] flex items-center justify-center"><svg width="5" height="3" viewBox="0 0 5 3"><path d="M0 0l2.500 3L5 0z" fill="#777"/></svg></i>
            </span>
          </div>
        </div>
        <div class="mt-[4px] h-[20px] flex items-center">
          <span class="w-[125px] tracking-[-0.3px]">模量时间尺度 (用于粘弹性):</span>
          <div class="w-[40px] h-[20px] bg-white border border-[#c4c4c4] flex items-center">
            <span class="ml-[2px]">长期</span>
            <span class="ml-auto w-[10px] h-[18px] bg-[#e0e0e0] border-l border-[#bbb] flex items-center justify-center"><svg width="7" height="4" viewBox="0 0 7 4"><path d="M.5.5l3 3 3-3" fill="none" stroke="#666"/></svg></span>
          </div>
        </div>
        <label class="mt-[7px] h-[11px] flex items-center"><span class="w-[11px] h-[11px] bg-white border border-[#555]"></span><span class="ml-[3px]">无压缩</span></label>
        <label class="mt-[9px] h-[11px] flex items-center"><span class="w-[11px] h-[11px] bg-white border border-[#555]"></span><span class="ml-[3px]">无拉伸</span></label>

        <!-- data group -->
        <div class="relative mt-[13px] -ml-px w-[430px] h-[151px] border border-[#dedede] pl-[3px] pt-[14px]">
          <span class="absolute left-[7px] -top-[5px] px-[2px] bg-[#f7f7f7] text-[10px] leading-[11px]">数据</span>
          <div class="w-[421px] h-[132px] bg-white border border-[#b4b4b4]">
            <div class="flex h-[17px] bg-[#f9f9f9] w-[179px] font-bold text-[10px]">
              <span class="w-[13px] border-r border-b border-[#e4e4e4]"></span>
              <span class="w-[83px] border-r border-b border-[#e4e4e4] flex items-center justify-center">杨氏模量</span>
              <span class="w-[82px] border-r border-b border-[#e4e4e4] flex items-center justify-center">泊松比</span>
            </div>
            <div class="flex h-[17px] w-[179px]">
              <span class="w-[13px] border-r border-b border-[#e4e4e4] flex items-center pl-[4px] font-bold font-['Liberation_Sans',sans-serif]">1</span>
              <span class="w-[83px] border-r border-b border-[#e4e4e4] flex items-center justify-center">210000</span>
              <span class="w-[82px] border-r border-b border-[#e4e4e4] flex items-center justify-center">0.3</span>
            </div>
          </div>
        </div>
      </div>

      <div class="mt-[9px] h-[18px] flex">
        <button class="ml-[93px] w-[35px] h-[18px] bg-[#e3e3e3] border border-[#c0c0c0] flex items-center justify-center">确定</button>
        <button class="ml-[190px] w-[35px] h-[18px] bg-[#e3e3e3] border border-[#c0c0c0] flex items-center justify-center">取消</button>
      </div>
    </div>
  </div>
</div>
</body>
</html>
